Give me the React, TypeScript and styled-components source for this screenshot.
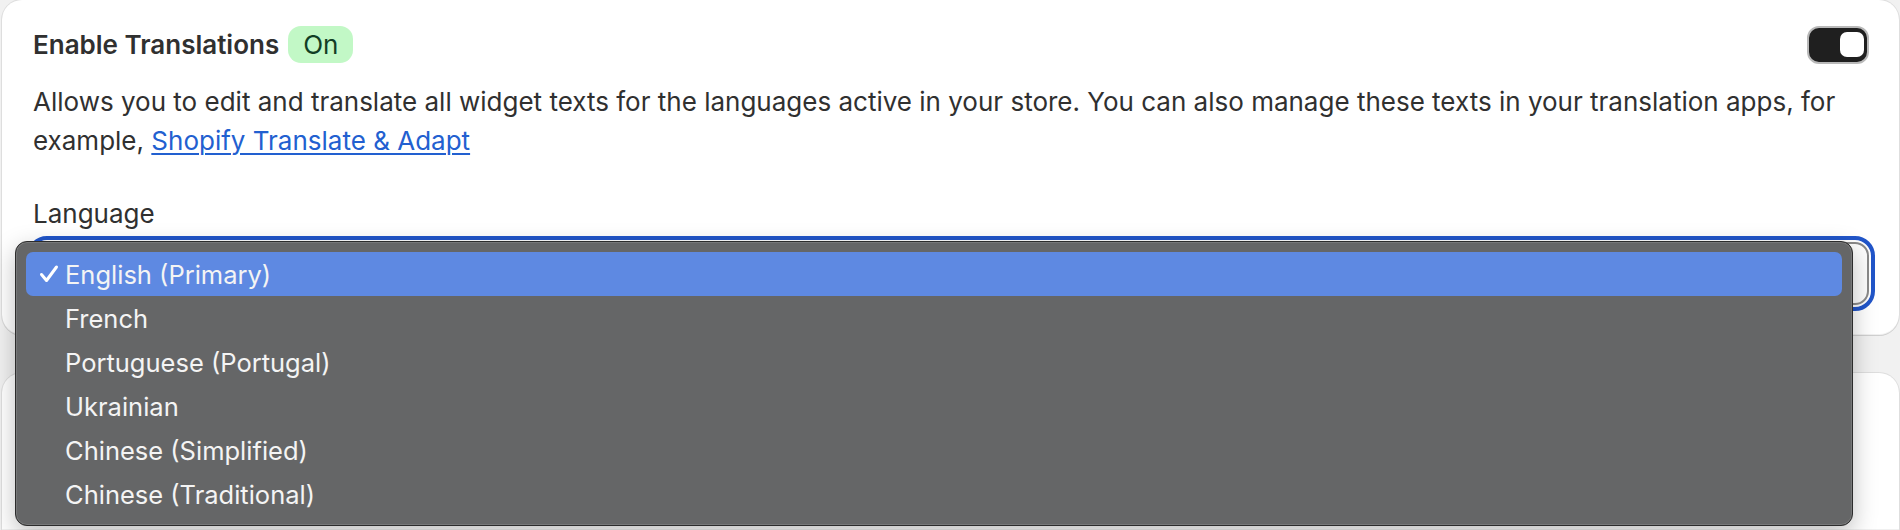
import React from "react";
import styled, { createGlobalStyle } from "styled-components";

const Global = createGlobalStyle`
  html, body { margin: 0; padding: 0; background: #f1f1f1; }
  body { font-family: Inter, "Noto Sans", sans-serif; color: #303030; overflow: hidden; }
  * { box-sizing: border-box; }
`;

const Page = styled.div`
  position: relative;
  width: 1900px;
  height: 530px;
  overflow: hidden;
  padding: 0 1px 0 2px;
  display: flex;
  flex-direction: column;
  gap: 38px;
`;

const Card = styled.section<{ $open?: boolean }>`
  background: #ffffff;
  border-radius: ${(p) => (p.$open ? "20px 20px 0 0" : "20px")};
  box-shadow: 0 1px 0 rgba(26, 26, 26, 0.07), 0 0 0 1px rgba(0, 0, 0, 0.08),
    inset 0 -1px 0 rgba(0, 0, 0, 0.06);
  padding: 24px 30px 30px 31px;
  flex: ${(p) => (p.$open ? "1 1 auto" : "0 0 auto")};
  min-height: 0;
`;

const Header = styled.div`
  display: flex;
  align-items: center;
  justify-content: space-between;
  height: 41px;
`;

const TitleGroup = styled.div`
  display: flex;
  align-items: center;
  gap: 9px;
`;

const Title = styled.h2`
  margin: 0;
  font-size: 26px;
  font-weight: 600;
  color: #303030;
`;

const Badge = styled.span`
  display: inline-flex;
  align-items: center;
  justify-content: center;
  height: 37px;
  padding: 0 15px;
  border-radius: 13px;
  background: #c2f8c6;
  color: #123e25;
  font-size: 26px;
  font-weight: 400;
`;

const Toggle = styled.div`
  width: 62px;
  height: 38px;
  border-radius: 12px;
  background: #1f1f1f;
  border: 2px solid #b9b9b9;
  display: flex;
  align-items: center;
  justify-content: flex-end;
  padding: 0 3px;
`;

const Knob = styled.span`
  width: 24px;
  height: 25px;
  border-radius: 7px;
  background: #ffffff;
`;

const Description = styled.p`
  margin: 17px 0 0;
  padding-right: 20px;
  font-size: 26px;
  line-height: 39px;
  color: #303030;
`;

const Link = styled.a`
  color: #2260d0;
  text-decoration: underline;
  text-underline-offset: 3px;
  text-decoration-thickness: 2px;
`;

const Label = styled.div`
  margin-top: 38px;
  font-size: 26px;
  line-height: 32px;
  color: #303030;
`;

const SelectBox = styled.div`
  margin: 12px 0 0;
  height: 63px;
  border: 2px solid #8a8a8a;
  border-radius: 14px;
  background: #fdfdfd;
  outline: 4px solid #2155c9;
  outline-offset: 2px;
`;

const Menu = styled.div`
  position: absolute;
  left: 15px;
  top: 241px;
  width: 1838px;
  height: 285px;
  padding: 10px 10px;
  background: #656667;
  border: 1.5px solid #2c2c2c;
  border-radius: 12px;
  box-shadow: inset 0 0 0 1px rgba(255, 255, 255, 0.12), 0 8px 24px rgba(0, 0, 0, 0.25);
  display: flex;
  flex-direction: column;
`;

const Item = styled.div<{ $active?: boolean }>`
  height: 44px;
  flex: 0 0 44px;
  display: flex;
  align-items: center;
  border-radius: 7px;
  background: ${(p) => (p.$active ? "#5e89e2" : "transparent")};
  color: #f4f4f4;
  font-family: Inter, "Noto Sans", sans-serif;
  font-size: 25.5px;
  font-weight: 400;
`;

const Check = styled.span`
  width: 39px;
  display: inline-flex;
  justify-content: flex-end;
  padding-right: 6px;
  color: #ffffff;
`;

const languages = [
  "English (Primary)",
  "French",
  "Portuguese (Portugal)",
  "Ukrainian",
  "Chinese (Simplified)",
  "Chinese (Traditional)",
];

export default function App() {
  return (
    <>
      <Global />
      <Page>
        <Card>
          <Header>
            <TitleGroup>
              <Title>Enable Translations</Title>
              <Badge>On</Badge>
            </TitleGroup>
            <Toggle>
              <Knob />
            </Toggle>
          </Header>
          <Description>
            Allows you to edit and translate all widget texts for the languages active in your store. You can also
            manage these texts in your translation apps, for example, <Link href="#">Shopify Translate &amp; Adapt</Link>
          </Description>
          <Label>Language</Label>
          <SelectBox />
        </Card>
        <Card $open />
        <Menu>
          {languages.map((l, i) => (
            <Item key={l} $active={i === 0}>
              <Check>
                {i === 0 && (
                  <svg width="20" height="20" viewBox="0 0 20 20" fill="none">
                    <path d="M2.5 10.5 L7.5 16.5 L17.5 3" stroke="#ffffff" strokeWidth="3" strokeLinecap="round" strokeLinejoin="round" />
                  </svg>
                )}
              </Check>
              {l}
            </Item>
          ))}
        </Menu>
      </Page>
    </>
  );
}
